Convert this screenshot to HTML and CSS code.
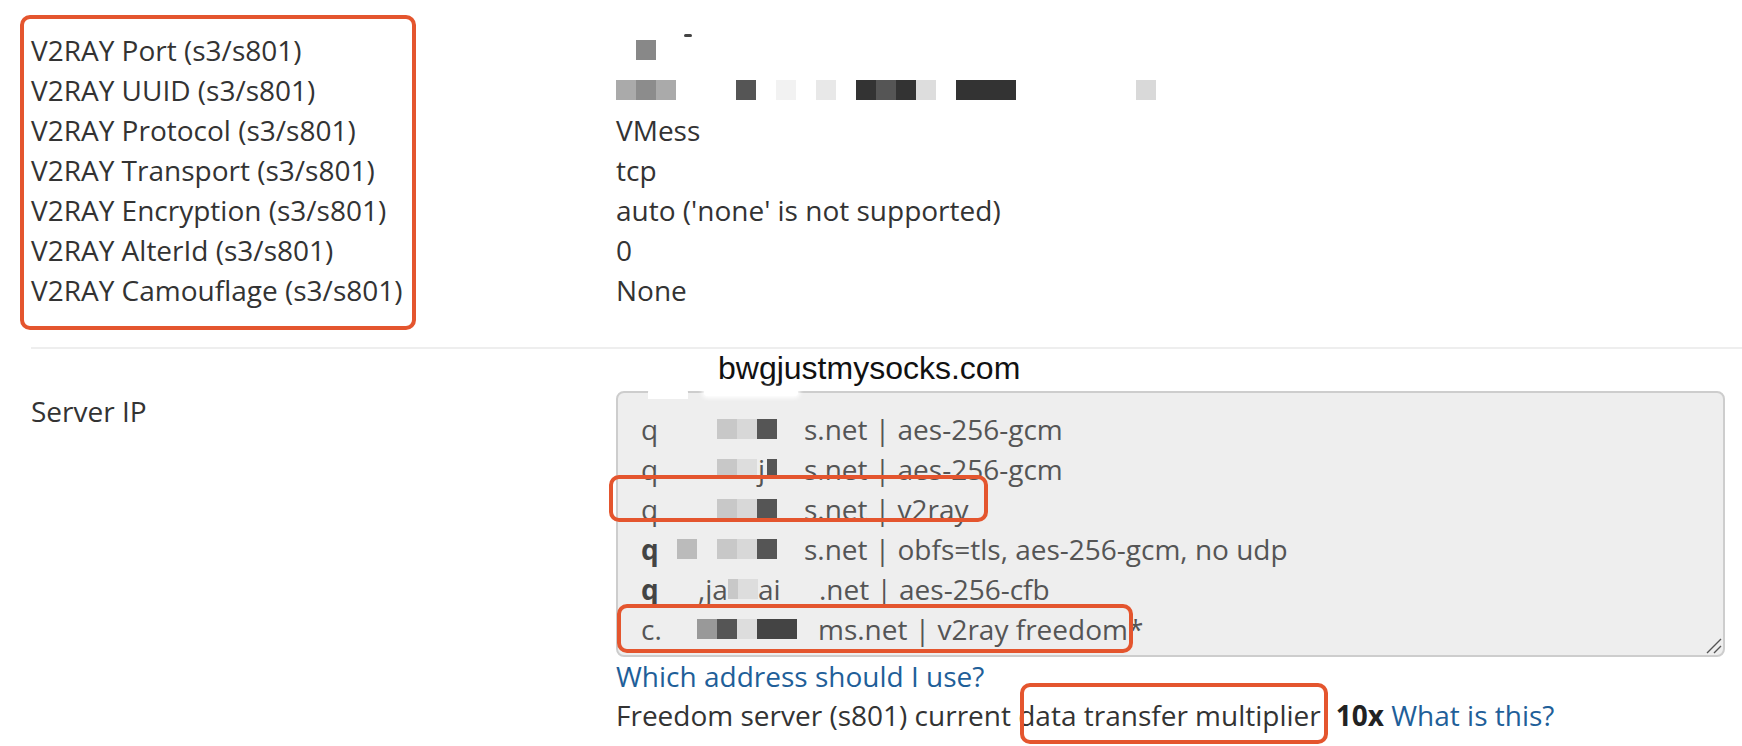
FILE: index.html
```html
<!DOCTYPE html>
<html lang="en">
<head>
<meta charset="utf-8">
<title>Service details</title>
<link rel="stylesheet" href="styles.css">
</head>
<body>
<div class="page">
  <dl class="details">
    <dt>V2RAY Port (s3/s801)</dt>
    <dd class="tiles"><i class="t"></i><i class="t c88"></i><i class="t"></i><i class="t dash"></i></dd>
    <dt>V2RAY UUID (s3/s801)</dt>
    <dd class="tiles">
      <i class="t caa"></i><i class="t c8c"></i><i class="t caa"></i><i class="t"></i><i class="t"></i><i class="t"></i>
      <i class="t c55"></i><i class="t"></i><i class="t cf2"></i><i class="t"></i><i class="t ce8"></i><i class="t"></i>
      <i class="t c33"></i><i class="t c55"></i><i class="t c33"></i><i class="t cdd"></i><i class="t"></i>
      <i class="t c33"></i><i class="t c33"></i><i class="t c33"></i>
      <i class="t"></i><i class="t"></i><i class="t"></i><i class="t"></i><i class="t"></i><i class="t"></i>
      <i class="t cd9"></i>
    </dd>
    <dt>V2RAY Protocol (s3/s801)</dt>
    <dd>VMess</dd>
    <dt>V2RAY Transport (s3/s801)</dt>
    <dd>tcp</dd>
    <dt>V2RAY Encryption (s3/s801)</dt>
    <dd>auto ('none' is not supported)</dd>
    <dt>V2RAY AlterId (s3/s801)</dt>
    <dd>0</dd>
    <dt>V2RAY Camouflage (s3/s801)</dt>
    <dd>None</dd>
  </dl>

  <hr class="divider">

  <div class="server">
    <div class="annot">bwgjustmysocks.com</div>
    <div class="server-label">Server IP</div>
    <div class="field">
      <div class="textarea">
        <div class="ta-line"><span class="lead">q</span><i class="t"></i><i class="t"></i><i class="t"></i><i class="t cc8"></i><i class="t cd8"></i><i class="t c55"></i><i class="t"></i><span class="rest r7">s.net | aes-256-gcm</span></div>
        <div class="ta-line"><span class="lead">q</span><i class="t"></i><i class="t"></i><i class="t"></i><i class="t cc8"></i><i class="t cdd"></i><i class="t half">j</i><i class="t"></i><span class="rest r7">s.net | aes-256-gcm</span></div>
        <div class="ta-line"><span class="lead">q</span><i class="t"></i><i class="t"></i><i class="t"></i><i class="t cc8"></i><i class="t cd8"></i><i class="t c55"></i><i class="t"></i><span class="rest r7">s.net | v2ray</span></div>
        <div class="ta-line"><span class="lead dark">q</span><i class="t"></i><i class="t cbb"></i><i class="t"></i><i class="t cc8"></i><i class="t cd8"></i><i class="t c55"></i><i class="t"></i><span class="rest r7">s.net | obfs=tls, aes-256-gcm, no udp</span></div>
        <div class="ta-line"><span class="lead dark">q</span><i class="t"></i><i class="t"></i><span class="frag">,ja</span><i class="t narrow cc8"></i><i class="t cdd"></i><span class="frag wide">ai</span><span class="rest r23">.net | aes-256-cfb</span></div>
        <div class="ta-line"><span class="lead">c.</span><i class="t"></i><i class="t"></i><i class="t c99"></i><i class="t c55"></i><i class="t cdd"></i><i class="t c44"></i><i class="t c44"></i><span class="rest r23">ms.net | v2ray freedom*</span></div>
        <svg class="grip" width="16" height="16" viewBox="0 0 16 16" aria-hidden="true"><path d="M15 1 L1 15 M15 8 L8 15" stroke="#555" stroke-width="1.4" fill="none"/></svg>
      </div>
      <div class="smudge smudge-a"></div>
      <div class="smudge smudge-b"></div>
      <p class="help"><a href="#">Which address should I use?</a></p>
      <p class="help">Freedom server (s801) current <span class="hl">data transfer multiplier</span><b class="mult">10x</b> <a href="#">What is this?</a></p>
    </div>
  </div>

  <div class="mark mark-1"></div>
  <div class="mark mark-2"></div>
  <div class="mark mark-3"></div>
  <div class="mark mark-4"></div>
</div>
</body>
</html>
```

FILE: styles.css
```css
html, body {
  margin: 0;
  background: #fff;
}
body {
  font-family: "Open Sans", "Noto Sans", sans-serif;
  font-size: 28px;
  line-height: 40px;
  color: #333;
  overflow: hidden;
}
.page {
  position: relative;
  padding: 30px 17px 0 31px;
  height: 716px;
}

/* details list */
.details {
  display: grid;
  grid-template-columns: 585px 1fr;
  margin: 0;
}
.details dt,
.details dd {
  margin: 0;
  height: 40px;
  white-space: nowrap;
}
.tiles {
  display: flex;
  align-items: center;
}

/* mosaic tiles */
.t {
  display: block;
  flex: none;
  width: 20px;
  height: 20px;
  font-style: normal;
  position: relative;
}
.t.narrow { width: 10px; }
.caa { background: #aaa; }
.c88 { background: #888; }
.c8c { background: #8c8c8c; }
.c55 { background: #555; }
.cf2 { background: #f2f2f2; }
.ce8 { background: #e8e8e8; }
.c33 { background: #333; }
.cdd { background: #ddd; }
.cd9 { background: #d9d9d9; }
.cc8 { background: #c8c8c8; }
.cd8 { background: #d8d8d8; }
.cbb { background: #bbb; }
.c99 { background: #999; }
.c44 { background: #444; }
.dash::before {
  content: "";
  position: absolute;
  left: 8px;
  top: -6px;
  width: 8px;
  height: 3px;
  border-radius: 2px;
  background: #444;
}
.half {
  background: linear-gradient(to right, transparent 50%, #555 50%);
  color: #555;
  font-size: 28px;
  line-height: 20px;
  text-indent: 1px;
}

.divider {
  border: 0;
  border-top: 2px solid #eee;
  margin: 37px -17px 0 0;
  height: 0;
}

/* server ip */
.server {
  display: grid;
  grid-template-columns: 585px 1109px;
}
.annot {
  grid-column: 2;
  font-family: "Liberation Sans", Arial, sans-serif;
  font-size: 32px;
  line-height: 38px;
  color: #111;
  padding-left: 102px;
  margin-bottom: 4px;
}
.server-label {
  grid-column: 1;
}
.field {
  grid-column: 2;
  position: relative;
}
.textarea {
  position: relative;
  box-sizing: border-box;
  height: 266px;
  border: 2px solid #cdcdcd;
  border-radius: 8px;
  background: #eee;
  padding: 16px 19px 0 19px;
  color: #555;
  overflow: hidden;
}
.ta-line {
  display: flex;
  align-items: center;
  height: 40px;
  white-space: nowrap;
}
.lead {
  flex: none;
  width: 20px;
  padding-left: 4px;
  box-sizing: border-box;
}
.lead.dark {
  color: #444;
  font-weight: 700;
}
.frag {
  flex: none;
  margin-left: 1px;
}
.frag.wide {
  width: 40px;
  margin-left: 0;
}
.rest.r7 { margin-left: 7px; }
.rest.r23 { margin-left: 21px; }
.grip {
  position: absolute;
  right: 1px;
  bottom: 1px;
}
.smudge {
  position: absolute;
  background: #fff;
}
.smudge-a {
  left: 32px;
  top: -6px;
  width: 40px;
  height: 14px;
  border-radius: 50% 50% 0 0;
}
.smudge-b {
  left: 88px;
  top: -2px;
  width: 94px;
  height: 7px;
  border-radius: 4px;
  box-shadow: 0 0 4px 2px #fff;
}
.help {
  margin: 0;
  line-height: 39px;
  white-space: nowrap;
}
.help a {
  color: #1f5f99;
  text-decoration: none;
}
.mult {
  margin-left: 15px;
  color: #222;
}

/* annotation boxes */
.mark {
  position: absolute;
  border: 4px solid #e4552e;
  border-radius: 10px;
  box-sizing: border-box;
}
.mark-1 { left: 20px; top: 15px; width: 396px; height: 315px; }
.mark-2 { left: 609px; top: 475px; width: 379px; height: 47px; }
.mark-3 { left: 617px; top: 604px; width: 516px; height: 49px; }
.mark-4 { left: 1020px; top: 683px; width: 308px; height: 61px; }
```
